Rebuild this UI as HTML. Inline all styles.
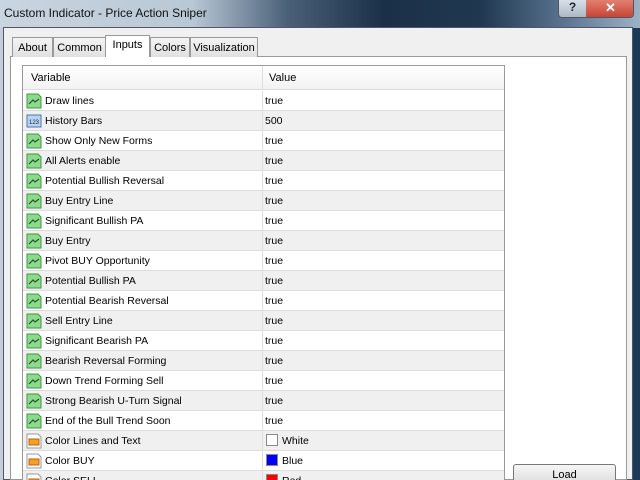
<!DOCTYPE html>
<html><head><style>
*{margin:0;padding:0;box-sizing:border-box}
html,body{width:640px;height:480px;overflow:hidden}
body{position:relative;font-family:"Liberation Sans",sans-serif;font-size:10.5px;color:#000;background:#1b3550}
.title{position:absolute;left:0;top:0;width:640px;height:28px;background:linear-gradient(90deg,#c9d5e0 0%,#b9c8d6 30%,#4a6078 45%,#1a3048 60%,#1f3850 75%,#5a7390 88%,#9eb2c6 100%)}
.title span{position:absolute;left:4px;top:6px;font-size:12px;color:#111}
.lf{position:absolute;left:0;top:28px;width:4px;height:452px;background:#c4ced8}
.rf{position:absolute;left:633px;top:28px;width:7px;height:452px;background:#1b3a58}
.btns{position:absolute;left:558px;top:0;width:76px;height:18px;border:1px solid #556;border-top:none;border-radius:0 0 4px 4px;overflow:hidden}
.hb{position:absolute;left:0;top:0;width:27px;height:18px;background:linear-gradient(#d8e0e8,#a8b6c4);color:#223;text-align:center;font-weight:bold;font-size:12px}
.xb{position:absolute;left:27px;top:0;width:49px;height:18px;background:linear-gradient(#e08070,#c84030);color:#fff;text-align:center;font-weight:bold;font-size:13px}
.dlg{position:absolute;left:3px;top:27px;width:630px;height:453px;background:#f0f0f0;border:1px solid #556}
.tab{position:absolute;top:37px;height:20px;border:1px solid #999;border-bottom:none;background:linear-gradient(#f4f4f4,#e0e0e0);font-size:11px;padding-top:4px;text-align:center}
.tab.on{top:35px;height:22px;background:#fff;padding-top:3px;z-index:2}
.panel{position:absolute;left:10px;top:56px;width:617px;height:424px;background:#fff;border:1px solid #999}
.grid{position:absolute;left:22px;top:65px;width:483px;height:415px;border:1px solid #9a9a9a;border-bottom:none;background:#fff;overflow:hidden}
.hdr{position:absolute;left:0;top:0;width:481px;height:24px;background:linear-gradient(#fff,#f2f2f2);border-bottom:1px solid #ddd}
.hdr span{position:absolute;top:6px;font-size:11px}
.row{position:absolute;left:0;width:481px;height:20px;border-bottom:1px solid #ddd}
.row.g{background:#f0f0f0}
.row .n{position:absolute;left:22px;top:4px}
.row .v{position:absolute;left:242px;top:4px}
.row .sep{position:absolute;left:239px;top:0;width:1px;height:20px;background:#ddd}
.ic{position:absolute;left:3px;top:2px;width:16px;height:16px}
.sw{position:absolute;left:243px;top:3px;width:12px;height:12px;border:1px solid #888}
.load{position:absolute;left:513px;top:464px;width:103px;height:22px;border:1px solid #777;border-radius:3px;background:linear-gradient(#f6f6f6,#dcdcdc);text-align:center;padding-top:4px;font-size:11px}
</style></head><body>
<div class="title"><span>Custom Indicator - Price Action Sniper</span></div>
<div class="btns"><div class="hb">?</div><div class="xb">✕</div></div>
<div class="lf"></div><div class="rf"></div>
<div class="dlg"></div>
<div class="panel"></div>
<div class="tab" style="left:12px;width:41px">About</div>
<div class="tab" style="left:53px;width:53px">Common</div>
<div class="tab on" style="left:105px;width:45px">Inputs</div>
<div class="tab" style="left:150px;width:40px">Colors</div>
<div class="tab" style="left:190px;width:68px">Visualization</div>
<div class="grid">
<div class="hdr"><span style="left:8px">Variable</span><span style="left:246px">Value</span><div style="position:absolute;left:239px;top:0;width:1px;height:24px;background:#ddd"></div></div>
<div id="rows"></div>
</div>
<div class="load">Load</div>
<script>
var d=[["Draw lines","true",0],["History Bars","500",1],["Show Only New Forms","true",0],["All Alerts enable","true",0],["Potential Bullish Reversal","true",0],["Buy Entry Line","true",0],["Significant Bullish PA","true",0],["Buy Entry","true",0],["Pivot BUY Opportunity","true",0],["Potential Bullish PA","true",0],["Potential Bearish Reversal","true",0],["Sell Entry Line","true",0],["Significant Bearish PA","true",0],["Bearish Reversal Forming","true",0],["Down Trend Forming Sell","true",0],["Strong Bearish U-Turn Signal","true",0],["End of the Bull Trend Soon","true",0],["Color Lines and Text","White",2,"#fff"],["Color BUY","Blue",2,"#00f"],["Color SELL","Red",2,"#f00"]];
var h="";
d.forEach(function(r,i){
var t=25+i*20;var ic;
if(r[2]==0)ic='<svg class="ic" viewBox="0 0 16 16"><path d="M1 1h11l3 3v11H1z" fill="#8fd88f" stroke="#3a9a3a"/><path d="M3 11l4-4 2 2 4-3" stroke="#1a5a1a" fill="none" stroke-width="1.2"/></svg>';
else if(r[2]==1)ic='<svg class="ic" viewBox="0 0 16 16"><rect x="1" y="2" width="14" height="12" fill="#b8d4f0" stroke="#4a78b0"/><text x="8" y="11" font-size="6" text-anchor="middle" fill="#124" font-family="Liberation Sans">123</text></svg>';
else ic='<svg class="ic" viewBox="0 0 16 16"><path d="M1 1h11l3 3v11H1z" fill="#fff" stroke="#999"/><rect x="3" y="6" width="10" height="6" fill="#f4a020" stroke="#c06010"/></svg>';
h+='<div class="row'+(i%2?' g':'')+'" style="top:'+t+'px">'+ic+'<span class="n">'+r[0]+'</span><div class="sep"></div>'+(r[3]?'<div class="sw" style="background:'+r[3]+'"></div><span class="v" style="left:259px">'+r[1]+'</span>':'<span class="v">'+r[1]+'</span>')+'</div>';
});
document.getElementById("rows").innerHTML=h;
</script>
</body></html>
